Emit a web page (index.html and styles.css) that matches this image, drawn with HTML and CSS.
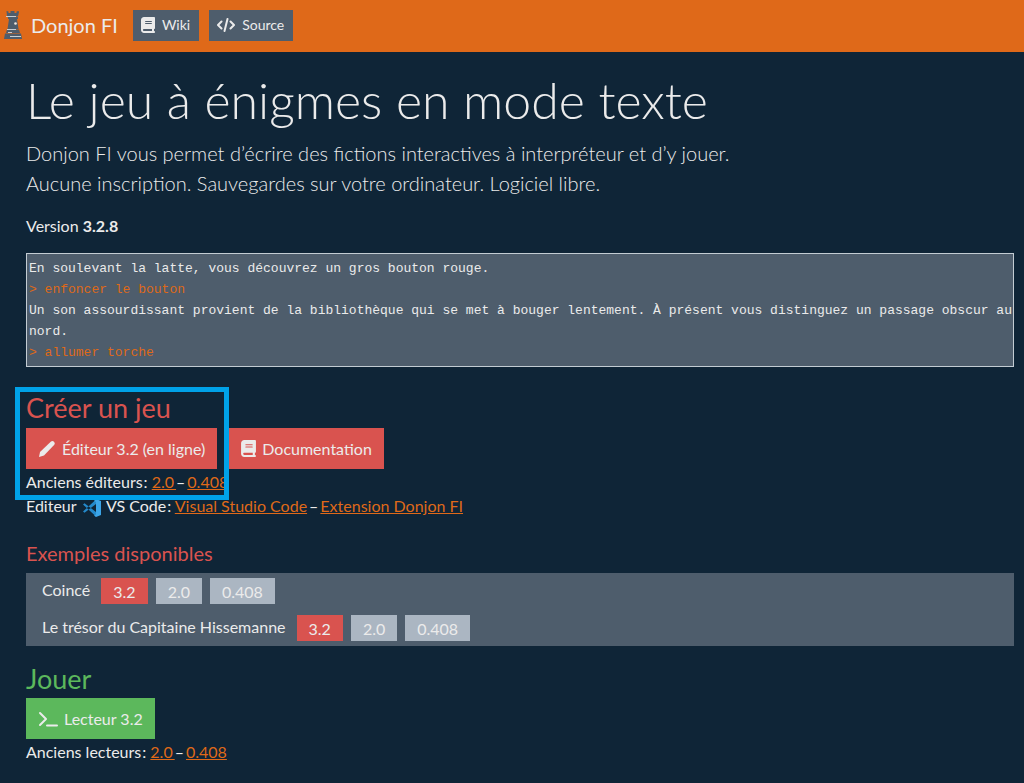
FILE: index.html
```html
<!DOCTYPE html>
<html lang="fr">
<head>
<meta charset="utf-8">
<title>Donjon FI</title>
<link rel="stylesheet" href="styles.css">
</head>
<body>
<header class="navbar">
  <a class="brand" href="#">
    <svg class="rook" viewBox="0 0 18 28" width="18" height="28" aria-hidden="true">
      <path fill="#4e5d6c" d="M2.500 0l2 .5v1.500h2V0h4v2h2V.5l2-.5.500 1-1 4.500h-11zM4 6h10v2H4zM5 8h8l1.500 10h-11zM3 18.500h12l1 3.500H2zM1 22.500h16l1 5.500H0z"/>
      <path stroke="#c9cfd3" d="M2 5.500h10M3 18.500h9M4 21.500h4M6 25.500h11" fill="none"/>
      <circle cx="11.500" cy="12.500" r="1.300" fill="#f3e8df"/>
    </svg>
    <span>Donjon FI</span>
  </a>
  <a class="nav-button" href="#">
    <svg viewBox="0 0 448 512" width="14" height="16" aria-hidden="true"><path fill="currentColor" d="M96 0C43 0 0 43 0 96v320c0 53 43 96 96 96h320c18 0 32-14 32-32s-14-32-32-32v-64c18 0 32-14 32-32V32c0-18-14-32-32-32zm0 384h256v64H96c-18 0-32-14-32-32s14-32 32-32zm32-240c0-9 7-16 16-16h192c9 0 16 7 16 16s-7 16-16 16H144c-9 0-16-7-16-16zm16 48h192c9 0 16 7 16 16s-7 16-16 16H144c-9 0-16-7-16-16s7-16 16-16z"/></svg>
    <span>Wiki</span>
  </a>
  <a class="nav-button" href="#">
    <svg viewBox="0 0 18 14" width="18" height="14" fill="none" stroke="currentColor" stroke-width="2" stroke-linecap="round" stroke-linejoin="round" aria-hidden="true"><path d="M4.500 3.500L1 7l3.500 3.500M13.500 3.500L17 7l-3.500 3.500M10.500 1l-3 12"/></svg>
    <span>Source</span>
  </a>
</header>
<main class="content">
  <h1 class="title">Le jeu à énigmes en mode texte</h1>
  <p class="lead">Donjon FI vous permet d’écrire des fictions interactives à interpréteur et d’y jouer.<br>Aucune inscription. Sauvegardes sur votre ordinateur. Logiciel libre.</p>
  <p class="version">Version <b>3.2.8</b></p>
  <div class="console">
    <p>En soulevant la latte, vous découvrez un gros bouton rouge.</p>
    <p class="command">&gt; enfoncer le bouton</p>
    <p>Un son assourdissant provient de la bibliothèque qui se met à bouger lentement. À présent vous distinguez un passage obscur au nord.</p>
    <p class="command">&gt; allumer torche</p>
  </div>

  <section class="create">
    <div class="highlight"></div>
    <h2 class="heading danger-text">Créer un jeu</h2>
    <div class="actions">
      <a class="button danger" href="#">
        <svg viewBox="0 0 18 18" width="18" height="18" aria-hidden="true"><path fill="currentColor" d="M1 17l1-5L13 1.500q1.500-1.200 3 .2t.300 3L6 15.500z"/></svg>
        <span>Éditeur 3.2 (en ligne)</span>
      </a>
      <a class="button danger" href="#">
        <svg viewBox="0 0 448 512" width="15" height="17" aria-hidden="true"><path fill="currentColor" d="M96 0C43 0 0 43 0 96v320c0 53 43 96 96 96h320c18 0 32-14 32-32s-14-32-32-32v-64c18 0 32-14 32-32V32c0-18-14-32-32-32zm0 384h256v64H96c-18 0-32-14-32-32s14-32 32-32zm32-240c0-9 7-16 16-16h192c9 0 16 7 16 16s-7 16-16 16H144c-9 0-16-7-16-16zm16 48h192c9 0 16 7 16 16s-7 16-16 16H144c-9 0-16-7-16-16s7-16 16-16z"/></svg>
        <span>Documentation</span>
      </a>
    </div>
    <p class="links">Anciens éditeurs&#8202;: <a href="#">2.0&#8201;</a>–&#8201;<a href="#">0.408</a></p>
    <p class="links">Editeur
      <svg class="vscode" viewBox="0 0 18 18" width="18" height="18" aria-hidden="true"><path fill="#2489ca" d="M0 5.500l1.500-1.300L13 13v4.500zM0 12.500l1.500 1.300L13 5V.5z"/><path fill="#3ba5e8" d="M13 0l5 2v14l-5 2-2-1.500 2-1V3l-2-1z"/></svg>
      VS Code&#8202;: <a href="#">Visual Studio Code</a>&#8201;–&#8201;<a href="#">Extension Donjon FI</a></p>
  </section>

  <section class="examples">
    <h3 class="subheading danger-text">Exemples disponibles</h3>
    <ul class="panel">
      <li class="example"><span class="name">Coincé</span><a class="tag danger" href="#">3.2</a><a class="tag" href="#">2.0</a><a class="tag" href="#">0.408</a></li>
      <li class="example"><span class="name">Le trésor du Capitaine Hissemanne</span><a class="tag danger" href="#">3.2</a><a class="tag" href="#">2.0</a><a class="tag" href="#">0.408</a></li>
    </ul>
  </section>

  <section class="play">
    <h2 class="heading success-text">Jouer</h2>
    <div class="actions">
      <a class="button success" href="#">
        <svg viewBox="0 0 20 16" width="20" height="16" fill="none" stroke="currentColor" stroke-width="2" stroke-linecap="round" stroke-linejoin="round" aria-hidden="true"><path d="M2 2l6 6-6 6M9 14.500h10"/></svg>
        <span>Lecteur 3.2</span>
      </a>
    </div>
    <p class="links">Anciens lecteurs&#8202;: <a href="#">2.0&#8201;</a>–&#8201;<a href="#">0.408</a></p>
  </section>
</main>
</body>
</html>
```
FILE: styles.css
```css
* { box-sizing: border-box; }
body {
  margin: 0;
  background: #0f2537;
  color: #ebebeb;
  font: 16px/24px Lato, "Liberation Sans", sans-serif;
}
h1, h2, h3, p, ul { margin: 0; padding: 0; font-weight: 400; }
a { color: #df6919; }
svg { flex: none; }

.navbar {
  display: flex;
  align-items: center;
  min-height: 52px;
  padding: 0 4px 2px;
  background: #df6919;
}
.brand {
  display: flex;
  align-items: center;
  gap: 9px;
  margin-right: 15px;
  color: #ebebeb;
  font-size: 20px;
  text-decoration: none;
}
.nav-button {
  display: flex;
  align-items: center;
  gap: 7px;
  height: 31px;
  margin-right: 10px;
  padding: 0 9px 0 8px;
  background: #4e5d6c;
  color: #ebebeb;
  font-size: 14px;
  text-decoration: none;
}

.content { padding: 18px 10px 20px 26px; }
.title { font-size: 50px; line-height: 60px; font-weight: 300; }
.lead { margin-top: 8px; font-size: 20px; line-height: 30px; font-weight: 300; }
.version { margin-top: 16px; }
.console {
  margin-top: 15px;
  padding: 4px 0 3px 2px;
  border: 1px solid #c3ccd3;
  background: #4e5d6c;
  font: 13px/21px "Liberation Mono", monospace;
}
.command { color: #df6919; }

.create { position: relative; margin-top: 24px; }
.highlight {
  position: absolute;
  top: -4px;
  left: -11px;
  width: 214px;
  height: 113px;
  border: 5px solid #00a2e8;
}
.heading { font-size: 27px; line-height: 34px; }
.danger-text { color: #d9534f; }
.success-text { color: #5cb85c; }
.actions { display: flex; gap: 12px; margin: 3px 0 1px; }
.button {
  display: flex;
  align-items: center;
  gap: 6px;
  height: 41px;
  padding: 0 12px;
  color: #ebebeb;
  text-decoration: none;
}
.danger { background: #d9534f; }
.success { background: #5cb85c; }
.vscode { margin: 0 1px 0 3px; vertical-align: -5px; }

.examples { margin-top: 23px; }
.subheading { font-size: 20px; line-height: 24px; }
.panel {
  display: flex;
  flex-direction: column;
  gap: 11px;
  margin-top: 8px;
  padding: 5px 16px;
  background: #4e5d6c;
  list-style: none;
}
.example { display: flex; gap: 8px; }
.name { margin-right: 3px; }
.tag {
  height: 26px;
  padding: 2px 12px 0;
  background: #abb6c2;
  color: #ebebeb;
  text-decoration: none;
}
.tag.danger { background: #d9534f; }
.play { margin-top: 16px; }
.play .actions { margin-top: 2px; }
```
